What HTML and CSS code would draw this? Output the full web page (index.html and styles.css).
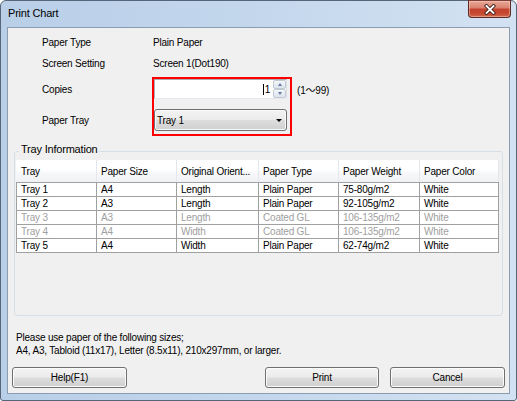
FILE: index.html
```html
<!DOCTYPE html>
<html lang="en">
<head>
<meta charset="utf-8">
<title>Print Chart</title>
<link rel="stylesheet" href="styles.css">
</head>
<body>
<div class="window">
  <div class="titlebar">
    <span class="title">Print Chart</span>
    <button class="close" aria-label="Close">
      <svg width="12" height="11" viewBox="0 0 12 11">
        <path d="M2.5 2 L9.5 9 M9.5 2 L2.5 9" stroke="#3b1f19" stroke-width="3.6" stroke-linecap="square" fill="none"/>
        <path d="M2.5 2 L9.5 9 M9.5 2 L2.5 9" stroke="#ffffff" stroke-width="1.8" stroke-linecap="square" fill="none"/>
      </svg>
    </button>
  </div>
  <div class="client">
    <div class="settings">
      <div class="row r1"><span class="label">Paper Type</span><span class="value">Plain Paper</span></div>
      <div class="row r2"><span class="label">Screen Setting</span><span class="value">Screen 1(Dot190)</span></div>
      <div class="row r3">
        <span class="label">Copies</span>
        <div class="spin">
          <div class="spin-input"><span class="caret"></span><span>1</span></div>
          <div class="spin-buttons">
            <span class="spin-btn"><span class="up"></span></span>
            <span class="spin-btn"><span class="down"></span></span>
          </div>
        </div>
        <span class="range">(1～99)</span>
      </div>
      <div class="row r4">
        <span class="label">Paper Tray</span>
        <div class="combo"><span>Tray 1</span><span class="arrow"></span></div>
      </div>
      <div class="highlight"></div>
    </div>

    <fieldset class="group">
      <legend>Tray Information</legend>
      <div class="list">
        <table>
          <thead>
            <tr><th class="c1">Tray</th><th class="c2">Paper Size</th><th class="c3">Original Orient...</th><th class="c4">Paper Type</th><th class="c5">Paper Weight</th><th class="c6">Paper Color</th></tr>
          </thead>
          <tbody>
            <tr><td>Tray 1</td><td>A4</td><td>Length</td><td>Plain Paper</td><td>75-80g/m2</td><td>White</td></tr>
            <tr><td>Tray 2</td><td>A3</td><td>Length</td><td>Plain Paper</td><td>92-105g/m2</td><td>White</td></tr>
            <tr class="disabled"><td>Tray 3</td><td>A3</td><td>Length</td><td>Coated GL</td><td>106-135g/m2</td><td>White</td></tr>
            <tr class="disabled"><td>Tray 4</td><td>A4</td><td>Width</td><td>Coated GL</td><td>106-135g/m2</td><td>White</td></tr>
            <tr><td>Tray 5</td><td>A4</td><td>Width</td><td>Plain Paper</td><td>62-74g/m2</td><td>White</td></tr>
          </tbody>
        </table>
      </div>
    </fieldset>

    <p class="note">Please use paper of the following sizes;<br>A4, A3, Tabloid (11x17), Letter (8.5x11), 210x297mm, or larger.</p>

    <div class="buttons">
      <button class="btn help">Help(F1)</button>
      <button class="btn print">Print</button>
      <button class="btn cancel">Cancel</button>
    </div>
  </div>
</div>
</body>
</html>
```

FILE: styles.css
```css
html, body {
  margin: 0;
  padding: 0;
  width: 517px;
  height: 401px;
  overflow: hidden;
  background: #ffffff;
}

body {
  font-family: "Liberation Sans", "Noto Sans CJK JP", sans-serif;
  font-size: 10px;
  letter-spacing: -0.2px;
  color: #000000;
}

.window {
  box-sizing: border-box;
  width: 517px;
  height: 401px;
  border: 1px solid #56667a;
  border-radius: 6px 6px 3px 3px;
  padding: 0 6px 6px;
  background: linear-gradient(90deg, #b9cfe8 0%, #c2d6ec 45%, #d3e2f2 100%);
}

.titlebar {
  height: 26px;
  margin: 0 -6px;
  display: flex;
  align-items: flex-start;
}

.title {
  padding-left: 7px;
  line-height: 25px;
  font-size: 11px;
  color: #000000;
}

.close {
  margin: -1px 5px 0 auto;
  width: 43px;
  height: 18px;
  padding: 0;
  border: 1px solid #5b2b24;
  border-top-color: #7a4038;
  border-radius: 0 0 4px 4px;
  background: linear-gradient(180deg, #e8a796 0%, #d98371 42%, #c4412d 52%, #c84a33 80%, #d26a52 100%);
  box-shadow: inset 0 0 0 1px rgba(255, 210, 200, 0.45);
  display: flex;
  align-items: center;
  justify-content: center;
}

.close svg {
  display: block;
}

.client {
  box-sizing: border-box;
  height: 367px;
  border: 1px solid #8c9db2;
  background: #f0f0f0;
  overflow: hidden;
}

/* settings */
.settings {
  position: relative;
  padding: 4px 0 0 34px;
}

.row {
  display: flex;
  align-items: center;
  height: 20px;
}

.r2 { margin-top: 1px; }
.r3 { margin-top: 6px; }
.r4 { margin-top: 10px; height: 22px; }

.label {
  width: 111px;
  flex: none;
}

.spin {
  box-sizing: border-box;
  margin-left: 1px;
  width: 133px;
  height: 20px;
  border: 1px solid #abadb3;
  border-right-color: #dbdfe6;
  border-bottom-color: #e3e9ef;
  background: #ffffff;
  display: flex;
}

.spin-input {
  flex: 1;
  display: flex;
  justify-content: flex-end;
  align-items: center;
  padding-right: 3px;
}

.caret {
  width: 1px;
  height: 11px;
  background: #000000;
  margin-right: 0.5px;
}

.spin-buttons {
  width: 13px;
  display: flex;
  flex-direction: column;
}

.spin-btn {
  box-sizing: border-box;
  flex: 1;
  border: 1px solid #c2cad4;
  border-radius: 2px;
  background: linear-gradient(180deg, #f5f7fa 0%, #e8edf3 50%, #dce3eb 100%);
  display: flex;
  align-items: center;
  justify-content: center;
}

.up, .down {
  width: 0;
  height: 0;
  border-left: 2.5px solid transparent;
  border-right: 2.5px solid transparent;
}

.up { border-bottom: 3px solid #5d7aa6; }
.down { border-top: 3px solid #5d7aa6; }

.range {
  margin-left: 10px;
}

.combo {
  box-sizing: border-box;
  margin-left: 1px;
  width: 133px;
  height: 22px;
  border: 1px solid #707070;
  border-radius: 3px;
  padding-left: 2px;
  background: linear-gradient(180deg, #f3f3f3 0%, #ebebeb 48%, #dddddd 52%, #cfcfcf 100%);
  box-shadow: inset 0 0 0 1px #fafafa;
  display: flex;
  align-items: center;
}

.arrow {
  margin-left: auto;
  margin-right: 4px;
  width: 0;
  height: 0;
  border-left: 3px solid transparent;
  border-right: 3px solid transparent;
  border-top: 3px solid #000000;
}

.highlight {
  position: absolute;
  left: 144px;
  top: 49px;
  box-sizing: border-box;
  width: 140px;
  height: 59px;
  border: 2px solid #ff0000;
  pointer-events: none;
}

/* group box */
.group {
  margin: 12px 6px 0;
  padding: 1px 3px 1px 1px;
  border: 1px solid #d5dfe5;
  border-radius: 3px;
  min-width: 0;
}

.group legend {
  margin-left: 3px;
  padding: 0 2px 4px;
  font-size: 11px;
  line-height: 12px;
}

.list {
  height: 154px;
}

.list table {
  border-collapse: separate;
  border-spacing: 0;
  table-layout: fixed;
  width: 483px;
}

.c1 { width: 81px; }
.c2 { width: 80px; }
.c3 { width: 82px; }
.c4 { width: 80px; }
.c5 { width: 81px; }
.c6 { width: 79px; }

th, td {
  box-sizing: border-box;
  text-align: left;
  font-weight: normal;
  white-space: nowrap;
  overflow: hidden;
  padding: 0 0 0 4px;
}

th {
  height: 22px;
  padding-top: 1px;
  border-right: 1px solid #e3e7ec;
  background: linear-gradient(180deg, #ffffff 0%, #ffffff 45%, #f6f7f9 60%, #f1f2f5 100%);
}

th:first-child {
  border-left: 1px solid transparent;
}

td {
  height: 14px;
  line-height: 13px;
  background: #ffffff;
  border-right: 1px solid #a0a0a0;
  border-bottom: 1px solid #a0a0a0;
}

td:first-child {
  border-left: 1px solid #a0a0a0;
}

tbody tr:first-child td {
  height: 15px;
  border-top: 1px solid #a0a0a0;
}

.disabled td {
  color: #a0a0a0;
}

/* note */
.note {
  margin: 15px 8px 0;
  line-height: 13px;
}

/* buttons */
.buttons {
  margin-top: 10px;
  padding: 0 4px;
  display: flex;
  gap: 11px;
}

.btn {
  box-sizing: border-box;
  width: 115px;
  height: 21px;
  padding: 0;
  font: inherit;
  letter-spacing: inherit;
  color: #000000;
  border: 1px solid #707070;
  border-radius: 3px;
  background: linear-gradient(180deg, #f3f3f3 0%, #ebebeb 48%, #dddddd 52%, #cfcfcf 100%);
  box-shadow: inset 0 0 0 1px #fbfbfb;
}

.print {
  margin-left: auto;
  width: 114px;
}
```
